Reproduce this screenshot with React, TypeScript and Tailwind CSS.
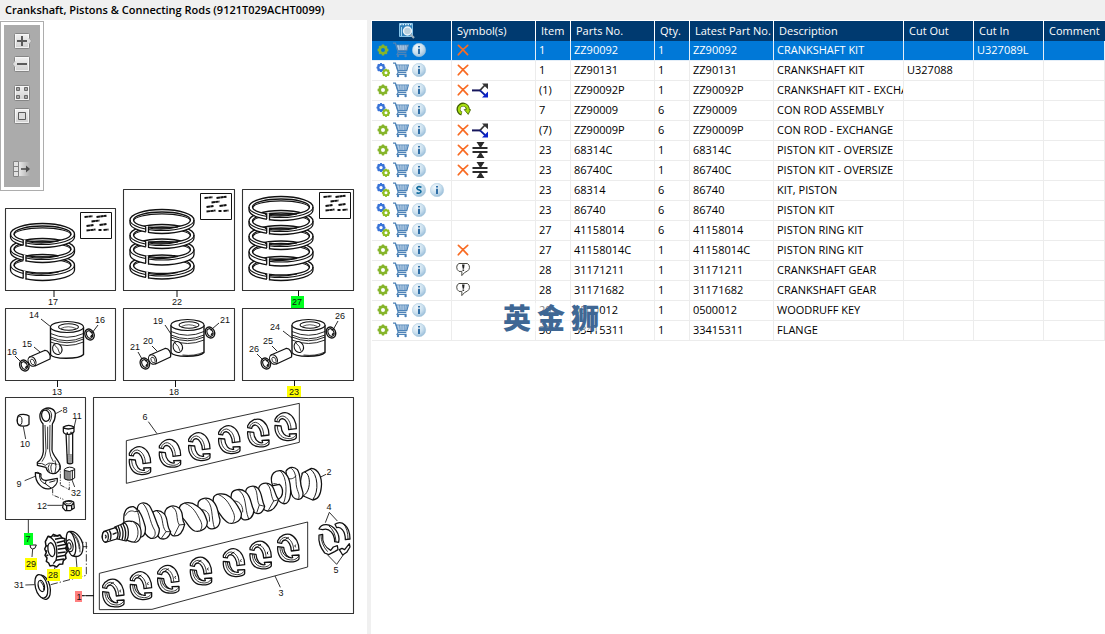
import React from "react";

type Part = {
  gears: "one" | "two";
  s?: boolean;
  symbols: ("x" | "split" | "cycle" | "squeeze" | "note")[];
  item: string;
  part: string;
  qty: string;
  latest: string;
  desc: string;
  out?: string;
  cutIn?: string;
};

const parts: Part[] = [
  { gears: "one", symbols: ["x"], item: "1", part: "ZZ90092", qty: "1", latest: "ZZ90092", desc: "CRANKSHAFT KIT", cutIn: "U327089L" },
  { gears: "two", symbols: ["x"], item: "1", part: "ZZ90131", qty: "1", latest: "ZZ90131", desc: "CRANKSHAFT KIT", out: "U327088" },
  { gears: "one", symbols: ["x", "split"], item: "(1)", part: "ZZ90092P", qty: "1", latest: "ZZ90092P", desc: "CRANKSHAFT KIT - EXCHANGE" },
  { gears: "two", symbols: ["cycle"], item: "7", part: "ZZ90009", qty: "6", latest: "ZZ90009", desc: "CON ROD ASSEMBLY" },
  { gears: "one", symbols: ["x", "split"], item: "(7)", part: "ZZ90009P", qty: "6", latest: "ZZ90009P", desc: "CON ROD - EXCHANGE" },
  { gears: "one", symbols: ["x", "squeeze"], item: "23", part: "68314C", qty: "1", latest: "68314C", desc: "PISTON KIT - OVERSIZE" },
  { gears: "two", symbols: ["x", "squeeze"], item: "23", part: "86740C", qty: "1", latest: "86740C", desc: "PISTON KIT - OVERSIZE" },
  { gears: "two", s: true, symbols: [], item: "23", part: "68314", qty: "6", latest: "86740", desc: "KIT, PISTON" },
  { gears: "two", symbols: [], item: "23", part: "86740", qty: "6", latest: "86740", desc: "PISTON KIT" },
  { gears: "two", symbols: [], item: "27", part: "41158014", qty: "6", latest: "41158014", desc: "PISTON RING KIT" },
  { gears: "one", symbols: ["x"], item: "27", part: "41158014C", qty: "1", latest: "41158014C", desc: "PISTON RING KIT" },
  { gears: "one", symbols: ["note"], item: "28", part: "31171211", qty: "1", latest: "31171211", desc: "CRANKSHAFT GEAR" },
  { gears: "one", symbols: ["note"], item: "28", part: "31171682", qty: "1", latest: "31171682", desc: "CRANKSHAFT GEAR" },
  { gears: "one", symbols: [], item: "29", part: "0500012", qty: "1", latest: "0500012", desc: "WOODRUFF KEY" },
  { gears: "one", symbols: [], item: "30", part: "33415311", qty: "1", latest: "33415311", desc: "FLANGE" },
];

/* ---------- table icons ---------- */

function Cog({ cx, cy, r, color }: { cx: number; cy: number; r: number; color: string }) {
  return (
    <g stroke={color} fill="none">
      <circle cx={cx} cy={cy} r={r * 0.62} strokeWidth={r * 0.5} />
      {[0, 45, 90, 135].map((a) => (
        <g key={a} transform={`rotate(${a} ${cx} ${cy})`} strokeWidth={r * 0.42}>
          <path d={`M${cx} ${cy - r} v${r * 0.35} M${cx} ${cy + r} v${-r * 0.35}`} />
        </g>
      ))}
    </g>
  );
}

function GearIcon({ kind }: { kind: "one" | "two" }) {
  return (
    <svg width="14" height="14" viewBox="0 0 14 14" className="shrink-0">
      {kind === "one" ? (
        <Cog cx={7} cy={7} r={5.4} color="#86b52b" />
      ) : (
        <>
          <Cog cx={5} cy={4.6} r={4.5} color="#3a74d8" />
          <Cog cx={10} cy={9.8} r={4.1} color="#8fbf22" />
        </>
      )}
    </svg>
  );
}

function CartIcon() {
  return (
    <svg width="16" height="16" viewBox="0 0 16 16" className="shrink-0" fill="none" stroke="#4d83b8">
      <path d="M0 1.2h2.4l2.9 9.2h8" strokeWidth="1.3" />
      <path d="M3.2 3h12.2l-1.6 5.6H5z" fill="#dbe9f5" strokeWidth="1.1" />
      <path d="M4 5h11M4.6 7h9.8M6.5 3l.7 5.6M9 3v5.6M11.3 3v5.6M13.4 3l-.7 5.6" strokeWidth=".6" />
      <path d="M5 10.4l-1 2h9.6" strokeWidth="1.1" />
      <circle cx="5" cy="14" r="1.2" fill="#4d83b8" stroke="none" />
      <circle cx="12.6" cy="14" r="1.2" fill="#4d83b8" stroke="none" />
    </svg>
  );
}

function Bubble({ kind }: { kind: "i" | "s" }) {
  return (
    <svg width="15" height="14" viewBox="0 0 15 14" className="shrink-0">
      <defs>
        <radialGradient id="ball" cx=".35" cy=".3" r=".8">
          <stop offset="0" stopColor="#f0f7fc" />
          <stop offset=".55" stopColor="#c9dfee" />
          <stop offset="1" stopColor="#8fb6d4" />
        </radialGradient>
      </defs>
      <circle cx="7" cy="7" r="6.7" fill="url(#ball)" stroke="#a9c8de" strokeWidth=".5" />
      {kind === "i" ? (
        <path d="M6 3h2v1.6H6zM6 5.7h2V11H6z" fill="#2f6ea6" />
      ) : (
        <path d="M9.5 4.4Q7 3.1 5.5 4.1T6 6.5l2 .7Q9.500 8 8.600 9.400T4.500 9.700" fill="none" stroke="#0f6a9c" strokeWidth="1.6" />
      )}
    </svg>
  );
}

function SymbolIcon({ kind }: { kind: Part["symbols"][number] }) {
  return (
    <svg width="16" height="18" viewBox="0 0 16 18" className="shrink-0" fill="none">
      {kind === "x" && <path d="M3.400 4.400Q8 8.500 12.600 13.600M12.700 4.300Q7.500 8.500 3.300 13.800" stroke="#f86b23" strokeWidth="1.700" strokeLinecap="round" />}
      {kind === "split" && (
        <>
          <path d="M0 9.400h8" stroke="#16165c" strokeWidth="2" />
          <path d="M8 9.400L13 4" stroke="#333" strokeWidth="1.600" />
          <path d="M8 9.400L13 14" stroke="#0a1ea0" strokeWidth="1.800" />
          <path d="M10 2.500h6v5.800z" fill="#333" />
          <path d="M16 10.500v6h-6z" fill="#0a22cc" />
        </>
      )}
      {kind === "cycle" && (
        <>
          <path d="M6.800 12.600A4.600 4.600 0 1 1 12.600 8.800" stroke="#3e5c00" strokeWidth="4" />
          <path d="M9.200 8.600h6.400l-2.400 4.800z" fill="#a6dd10" stroke="#3e5c00" strokeWidth=".8" />
          <path d="M6.400 12.200A4.400 4.400 0 1 1 12.500 9.600" stroke="#a6dd10" strokeWidth="2.300" />
        </>
      )}
      {kind === "squeeze" && (
        <>
          <path d="M4.500 1h8L9.600 5.500H7.400zM4.500 17h8L9.600 12.500H7.400z" fill="#2b2b2b" />
          <path d="M.5 7h15M.5 11h15" stroke="#2b2b2b" strokeWidth="1.800" />
          <path d="M8.500 1v5M8.500 12v5" stroke="#2b2b2b" strokeWidth="1.800" />
        </>
      )}
      {kind === "note" && (
        <>
          <path d="M4 2.500h8.500q2 1.500 2 3.800t-2 3.700q-3 .8-5.700 4.600l.1-4.200H4Q1.700 9 1.700 6.200T4 2.500z" fill="#fff" stroke="#4a4a44" strokeWidth="1" />
          <path d="M7 3.500h2.600L9 7.800H7.700z" fill="#222" />
          <path d="M7.500 8.500h1.600v1.400H7.500z" fill="#222" />
        </>
      )}
    </svg>
  );
}

function SearchIcon() {
  return (
    <svg width="16" height="16" viewBox="0 0 16 16">
      <path d="M.5.5h13v13H.5z" fill="#2f7fb8" stroke="#86c4ea" />
      <path d="M1 1.500h12" stroke="#d9effb" strokeWidth="1.500" strokeDasharray="1.500 1" />
      <path d="M2.500 4v9" stroke="#a9d6f0" />
      <circle cx="8.500" cy="8" r="4" fill="#b9cfdc" stroke="#eef4f8" strokeWidth="1.400" />
      <path d="M11.500 11.200l3.500 3.800" stroke="#9fb2be" strokeWidth="2" />
    </svg>
  );
}

/* ---------- viewer toolbar ---------- */

const Plate = () => (
  <>
    <defs>
      <linearGradient id="plate" x2="0" y2="1">
        <stop offset="0" stopColor="#f2f2f2" />
        <stop offset="1" stopColor="#cfcfcf" />
      </linearGradient>
    </defs>
    <rect x="2.500" y=".5" width="15" height="15" rx="1" fill="url(#plate)" stroke="#858585" />
    <rect x="3.500" y="1.500" width="13" height="13" fill="none" stroke="#fafafa" strokeWidth=".8" />
  </>
);

const tools: { label: string; gap: string; art: React.ReactNode }[] = [
  {
    label: "Zoom in",
    gap: "mt-2",
    art: (
      <>
        <Plate />
        <path d="M17 5.500L19.500 8 17 10.500z" fill="#ececec" stroke="#8a8a8a" strokeWidth=".6" />
        <path d="M16.500 5.500h1v5h-1z" fill="#ececec" />
        <path d="M5 8h10M10 3v10" stroke="#5a5a5a" strokeWidth="2" />
      </>
    ),
  },
  {
    label: "Zoom out",
    gap: "mt-[7px]",
    art: (
      <>
        <Plate />
        <path d="M3 5.500L.5 8 3 10.500z" fill="#ececec" stroke="#8a8a8a" strokeWidth=".6" />
        <path d="M2.500 5.500h1v5h-1z" fill="#ececec" />
        <path d="M5 8h10" stroke="#5a5a5a" strokeWidth="2" />
      </>
    ),
  },
  {
    label: "Tile view",
    gap: "mt-[13px]",
    art: (
      <>
        <Plate />
        <path d="M4.500 2.500h3v3h-3zM12.500 2.500h3v3h-3zM4.500 10.500h3v3h-3zM12.500 10.500h3v3h-3z" fill="#a5a5a5" stroke="#6a6a6a" />
      </>
    ),
  },
  {
    label: "Fit to window",
    gap: "mt-[7px]",
    art: (
      <>
        <Plate />
        <path d="M6.500 4.500h7v7h-7z" fill="#ddd" stroke="#5a5a5a" />
      </>
    ),
  },
  {
    label: "Toggle list",
    gap: "mt-[37px]",
    art: (
      <>
        <defs>
          <linearGradient id="fade">
            <stop offset="0" stopColor="#e8e8e8" />
            <stop offset="1" stopColor="#ababab" />
          </linearGradient>
        </defs>
        <path d="M7 1h11v14H7z" fill="url(#fade)" />
        <path d="M1.500.5h5v15h-5zM1.500 5.500h5M1.500 10.500h5" fill="#e2e2e2" stroke="#828282" />
        <path d="M9 8h7" stroke="#4d4d4d" strokeWidth="1.600" />
        <path d="M14 4.500L18 8l-4 3.500z" fill="#4d4d4d" />
      </>
    ),
  },
];

/* ---------- parts drawing ---------- */

function PistonRing({ cx, cy, h = 4, gap = -18 }: { cx: number; cy: number; h?: number; gap?: number }) {
  const rx = 32;
  const ry = 10.5;
  const ix = 28.5;
  const iy = 8;
  const t = Math.sqrt(1 - (gap / rx) ** 2);
  const gy = cy + iy * t;
  return (
    <g strokeWidth="1.300">
      <path
        fillRule="evenodd"
        fill="#fff"
        d={`M${cx - rx} ${cy}A${rx} ${ry} 0 0 1 ${cx + rx} ${cy}v${h}A${rx} ${ry} 0 0 1 ${cx - rx} ${cy + h}ZM${cx - ix} ${cy}A${ix} ${iy} 0 0 1 ${cx + ix} ${cy}A${ix} ${iy} 0 0 1 ${cx - ix} ${cy}Z`}
      />
      <path d={`M${cx - rx} ${cy}A${rx} ${ry} 0 0 0 ${cx + rx} ${cy}`} strokeWidth="1.100" />
      <path d={`M${cx - ix} ${cy + 1}A${ix - 0.5} ${iy - 1} 0 0 1 ${cx + ix} ${cy + 1}`} strokeWidth="1.100" />
      <path d={`M${cx - 16} ${cy + 7.5}q16 3.500 32-.5`} strokeWidth="1.100" />
      <path d={`M${cx + gap} ${gy - 1}v${h + 4.5}`} stroke="#fff" strokeWidth="2.200" />
      <path d={`M${cx + gap - 1.3} ${gy - 0.5}v${h + 2.2}M${cx + gap + 1.5} ${gy}v${h + 3}`} strokeWidth="1.300" />
    </g>
  );
}

function NoteCard({ x, y }: { x: number; y: number }) {
  return (
    <g transform={`translate(${x} ${y})`}>
      <rect width="31" height="26" fill="#fff" strokeWidth="1" />
      <path
        d="M4 4.500l8-.8M16 4.500l10-1.300M11 9l8-1M6 13.500l7-1M19 12.500l7-1M6 18l9-1M18 17.500h3M23 17.500l5-.5"
        strokeWidth="1.900"
        strokeDasharray="3.500 .3"
      />
    </g>
  );
}

function Piston({ dx, dy, skirt }: { dx: number; dy: number; skirt?: boolean }) {
  return (
    <g transform={`translate(${dx} ${dy})`} strokeWidth="1.100">
      <path d="M50.500 327v27.500C53 359.500 79 359.500 83.500 354.500V327" fill="#fff" strokeWidth="1.400" />
      <ellipse cx="67" cy="327" rx="16.500" ry="5.500" fill="#fff" />
      <ellipse cx="68.500" cy="327" rx="10" ry="3.200" />
      <path d="M61 328.500q7-3.500 15 0" strokeWidth=".7" />
      <path d="M50.500 333.500q16.500 7.500 33 0M50.500 337q16.500 7.500 33 0M50.500 339q16.500 7.500 33 0M50.500 342q16.500 7 33 0" strokeWidth=".9" />
      {skirt && <path d="M62 357q12 1.500 21.500-3" strokeWidth=".8" />}
      <ellipse cx="57.300" cy="349" rx="4.600" ry="5.600" fill="#fff" transform="rotate(-20 57.300 349)" />
      <path d="M54.500 345q4 3 5 8" strokeWidth=".8" />
      <path d="M29.500 357L44.500 350.500C48 350 51.500 355 50 359L35 366z" fill="#fff" strokeWidth="1.300" />
      <ellipse cx="32" cy="361.500" rx="3.700" ry="5" fill="#fff" transform="rotate(-25 32 361.500)" />
      <ellipse cx="32.500" cy="362" rx="1.800" ry="3" transform="rotate(-25 32.500 362)" strokeWidth=".8" />
      {[
        [24.3, 365.5],
        [89.5, 334.5],
      ].map(([x, y]) => (
        <g key={x} transform={`rotate(-25 ${x} ${y})`}>
          <ellipse cx={x} cy={y} rx="4.500" ry="5.700" fill="#fff" strokeWidth="1.300" />
          <ellipse cx={x} cy={y} rx="2.800" ry="3.900" strokeWidth="1.100" />
          <path d={`M${x} ${y + 3}l2-1.500M${x + 1.5} ${y - 2.5}l1.500 1`} strokeWidth="1.500" />
        </g>
      ))}
    </g>
  );
}

function Shell({ x, y, hole }: { x: number; y: number; hole?: boolean }) {
  return (
    <g transform={`translate(${x} ${y})`}>
      <path d="M-32-4C-34 18-22 40 0 41C14 43 31 39 32 32V21L11 22L13 29C-2 32-13 16-14-2Z" fill="#fff" />
      <path d="M-25-3C-25 16-15 33 2 35C14 38 26 34 32 23" strokeWidth="2.500" />
      <path d="M-32-22C-24-38-8-44 5-41C23-34 32-14 32 6L9 9C9-8 0-22-9-24C-16-24-19-19-20-14L-32-16Z" fill="#fff" />
      <path d="M-26-17C-24-27-16-32-8-32C8-28 16-10 16 7" strokeWidth="2.500" />
      {hole && <path d="M22-10q-5 4 0 8M-20-2q2 26 22 30M-9-26l10-6" strokeWidth="3" />}
    </g>
  );
}

const boxes = [
  [5.5, 208.5, 110, 82],
  [123.5, 189.5, 111, 101],
  [242.5, 189.5, 111, 101],
  [5.5, 308.5, 110, 72],
  [123.5, 308.5, 111, 72],
  [242.5, 308.5, 111, 72],
  [5.5, 397.5, 80, 122],
  [93.5, 397.5, 260, 216],
];

const marks: { x: number; y: number; w: number; h: number; fill: string }[] = [
  { x: 291, y: 296, w: 13, h: 12, fill: "#00ff1e" },
  { x: 287, y: 386, w: 14, h: 11, fill: "#ffff00" },
  { x: 24, y: 533, w: 9, h: 12, fill: "#00ff1e" },
  { x: 25, y: 558, w: 12, h: 12, fill: "#ffff00" },
  { x: 47, y: 569, w: 13, h: 12, fill: "#ffff00" },
  { x: 69, y: 567, w: 13, h: 12, fill: "#ffff00" },
  { x: 75, y: 591, w: 7, h: 11, fill: "#ff8080" },
];

const callouts: [string, number, number][] = [
  ["17", 53, 302], ["22", 177, 302], ["27", 297, 302],
  ["14", 34, 315], ["16", 100, 320], ["15", 27, 344], ["16", 12, 352], ["13", 57, 392],
  ["19", 158, 321], ["21", 225, 320], ["20", 148, 341], ["21", 135, 347], ["18", 174, 392],
  ["24", 275, 327], ["26", 340, 316], ["25", 268, 341], ["26", 254, 349], ["23", 294, 392],
  ["8", 65, 410], ["11", 77, 416], ["10", 25, 444], ["9", 19, 484], ["32", 76, 493], ["12", 42, 506],
  ["7", 28, 539], ["29", 31, 564], ["28", 53, 575], ["30", 75, 573], ["31", 19, 585], ["1", 79, 597],
  ["6", 145, 417], ["2", 329, 472], ["4", 329, 507], ["5", 336, 570], ["3", 281, 593],
];

function ConRodGroup() {
  return (
    <g transform="translate(0 395) scale(0.33333)" strokeWidth="3.800">
      {/* bush */}
      <path d="M55 62C60 57 80 57 87 63V88C82 95 62 95 56 90C50 84 50 68 55 62Z" fill="#fff" />
      <ellipse cx="59" cy="77" rx="7" ry="13" strokeWidth="3" />
      {/* rod */}
      <path d="M129 86C117 75 115 51 132 42C150 34 166 44 166 58C166 70 162 80 157 87L156 165C158 180 170 190 179 207C184 222 172 237 158 236C146 234 140 228 138 217L112 211V202C122 196 128 188 130 170Z" fill="#fff" />
      <ellipse cx="137" cy="62" rx="12" ry="17" transform="rotate(-12 137 62)" />
      <path d="M135 90L138 168Q137 185 126 200M150 90L149 168Q150 185 160 200M143 95v68M138 42q14 0 17 18q0 12-6 22M112 206q14-4 24 5q10-10 22-6M158 205q-10 8-2 28M148 208q-8 10 0 22M165 196q6 18 0 38" strokeWidth="2.600" />
      {/* cap */}
      <path d="M106 233L123 237C120 249 128 258 140 256L172 250C174 264 165 276 150 281C126 286 105 262 106 233Z" fill="#fff" />
      <path d="M119 236q-3 24 18 31q-2-6 3-11M137 267l16 12M148 262l18-5M106 233q6-4 17 4" strokeWidth="3" />
      {/* bolt */}
      <path d="M198 112h20v92q-8 5-16 0z" fill="#fff" />
      <path d="M190 96q16-10 32 0v14q-6 9-18 8q-12 0-14-8zM190 98q14 8 32 0M202 112v6M213 110v7" fill="#fff" />
      <path d="M201 180h15M201 186h15M201 192h15M201 198h15M201 204h14M207 118v60" strokeWidth="2.500" />
      <path d="M193 223q15-12 31-2v28q-15 12-31 2zM193 226q15 8 31-2M198 228v27M204 229v27M210 229v27M217 226v27" fill="#fff" strokeWidth="3" />
      {/* nut */}
      <path d="M190 322q15-9 31-1l2 18-13 8h-14l-8-9zM190 324l10 8 15-1 7-9M200 332v14M215 331v13" fill="#fff" />
      <ellipse cx="205" cy="323" rx="9" ry="4" strokeWidth="2.500" />
      {/* leaders */}
      <g strokeWidth="2.500">
        <path d="M165 57L186 46M222 98L228 72M70 95L77 132M74 257L108 243M215 252L224 276M142 331H188M85 374V415M98 462L96 486M163 527L168 500M231 520L228 482M76 570L104 569" />
        <path d="M158 281V300L190 313M158 205L181 210V268M181 270L208 284V262" strokeDasharray="14 4 3 4" />
        <path d="M152 569L259 541V442H246" strokeDasharray="22 6 4 6" />
        <path d="M246 455H262M246 602H282M246 602H253" />
      </g>
      {/* key */}
      <path d="M90 450H109Q106 463 98 462T90 450z" fill="#fff" strokeWidth="3" />
      {/* timing gear */}
      <path d="M136 440l8-16 10 2 6-8 12 5 8-3 6 9 9 2-1 11 7 8-4 10 5 10-6 9 2 11-8 7-2 10-10 1-8 8-10-5-10 2-4-9-7-5 2-10-6-8 4-9-5-10 4-9z" fill="#fff" strokeWidth="4.500" />
      <path d="M144 424q14 4 22 20q8 24 2 52l-8 10" />
      <ellipse cx="154" cy="464" rx="10" ry="21" fill="#fff" transform="rotate(-10 154 464)" />
      <path d="M160 424l20-3M165 433l23-5M170 443l24-6M172 453l26-5M173 463l27-4M173 474l24-3M171 485l26-4M168 496l24-4M138 452l6 1M136 468l6 0M139 482l6-2" strokeWidth="4.500" />
      {/* flange */}
      <path d="M207 410C230 405 254 438 248 466C244 485 230 488 216 481Z" fill="#fff" />
      <ellipse cx="213" cy="446" rx="13" ry="37" transform="rotate(-10 213 446)" fill="#fff" />
      <ellipse cx="209" cy="452" rx="10" ry="18" transform="rotate(-10 209 452)" />
      <ellipse cx="208" cy="453" rx="5" ry="10" transform="rotate(-10 208 453)" strokeWidth="3" />
      <path d="M214 412q22 20 24 50M218 412q24 22 22 60" strokeWidth="2.500" />
      {/* washer */}
      <ellipse cx="130" cy="577" rx="20" ry="37" transform="rotate(-14 130 577)" fill="#fff" />
      <ellipse cx="124" cy="574" rx="18" ry="36" transform="rotate(-14 124 574)" fill="#fff" />
      <ellipse cx="124" cy="573" rx="9" ry="17" transform="rotate(-14 124 573)" />
      <path d="M121 560q12 8 10 26" strokeWidth="3" />
    </g>
  );
}

function CrankGroup() {
  return (
    <g transform="translate(90 395) scale(0.33333)" strokeWidth="3.800">
      <path d="M109 137L628 25V142L109 265ZM28 535L653 381V516L186 643L28 644Z" strokeWidth="2.600" />
      <path d="M175 80L201 116M690 247L708 238M555 543L571 577M706 383L718 352L742 378M713 480L740 508L761 478M-12 602H11" strokeWidth="2.600" />

      {[[150, 197], [240, 175], [328, 155], [418, 134], [505, 114], [587, 95]].map(([x, y]) => (
        <Shell key={x} x={x} y={y} />
      ))}
      {[[70, 594], [153, 572], [235, 553], [333, 528], [432, 503], [512, 480], [595, 459]].map(([x, y]) => (
        <Shell key={x} x={x} y={y} hole />
      ))}

      {/* crankshaft, rear to front */}
      <g fill="#fff">
        <path d="M636 235L664 220C686 222 697 248 694 276C692 300 684 314 668 315L640 303Z" />
        <path d="M660 222C684 236 688 290 668 314M640 303C630 290 628 250 640 232C660 226 668 284 640 303" strokeWidth="3" />
        <path d="M588 228C597 214 613 214 622 224C634 242 628 262 636 282C642 298 640 311 626 313C612 314 604 302 602 285L590 252Z" />
        <path d="M604 220C624 236 614 264 622 284C628 300 630 308 622 313M592 250C604 254 612 250 618 242" strokeWidth="2.600" />
        <path d="M545 262C540 236 556 225 573 227C594 234 602 262 602 292C600 318 592 328 580 326C566 322 560 310 556 296Z" />
        <path d="M571 228C592 246 592 300 580 326M550 266C566 264 580 280 576 300" strokeWidth="2.600" />
        <path d="M535 275L568 268C582 280 580 304 566 312L540 322Z" />
        <path d="M506 280C510 264 530 260 543 270C556 280 553 300 566 314C560 334 546 350 532 348C516 346 508 330 500 316Z" />
        <path d="M528 265C546 276 540 300 551 318L534 348M551 318L566 314" strokeWidth="2.600" />
        <path d="M467 290C468 274 492 268 504 280C518 296 514 316 524 334C520 350 510 360 496 354C482 348 474 322 462 308Z" />
        <path d="M490 274C506 288 498 314 508 330L500 354M508 330L524 334" strokeWidth="2.600" />
        <path d="M424 300C424 284 450 278 466 290C486 306 480 326 492 346C490 366 478 378 460 374C446 366 440 340 420 324Z" />
        <path d="M444 284C472 302 462 336 476 372M428 318C446 316 460 330 458 352" strokeWidth="2.600" />
        <path d="M370 310C372 296 402 290 420 306C440 322 444 334 454 354C456 376 438 388 416 384C394 374 388 346 368 332Z" />
        <path d="M384 298C412 310 420 332 430 352C436 366 434 378 426 385" strokeWidth="2.600" />
        <path d="M324 328C324 310 350 304 366 316C386 332 382 352 390 374C390 394 376 406 358 400C344 392 342 366 322 350Z" />
        <path d="M344 310C372 326 362 366 374 402M330 344C350 342 362 358 358 380" strokeWidth="2.600" />
        <path d="M268 342C268 322 300 316 320 332C342 346 346 362 352 380C352 400 336 412 314 408C292 398 290 372 266 360Z" />
        <path d="M282 324C312 334 320 358 332 378C338 392 336 402 328 408" strokeWidth="2.600" />
        <path d="M224 358C224 334 250 326 268 340C284 356 272 372 284 388C278 414 266 426 248 422C232 412 234 388 218 376Z" />
        <path d="M244 334C268 346 256 372 268 390L252 422M268 390L284 388" strokeWidth="2.600" />
        <path d="M184 364C186 344 208 342 222 356C236 370 228 394 242 410C238 428 226 436 210 430C194 418 198 394 182 384Z" />
        <path d="M200 348C224 362 212 392 228 410L214 430M228 410L242 410M188 384C202 382 210 396 206 412" strokeWidth="2.600" />
        <path d="M142 340C144 322 166 318 178 332C192 352 196 376 208 402C208 424 198 432 182 430C164 424 156 398 146 378Z" />
        <path d="M158 325C178 344 178 380 194 406C198 418 194 426 186 430" strokeWidth="2.600" />
        <path d="M102 382C98 350 110 334 130 335C150 344 158 366 166 396C168 416 162 426 148 428L120 410Z" />
        <path d="M136 340C148 350 152 390 150 416M106 362C114 346 126 346 134 350L150 348" strokeWidth="2.600" />
        <path d="M96 388C104 376 128 374 144 388C158 402 156 434 140 441C124 444 106 434 98 426Z" />
        <path d="M126 378C148 388 150 428 132 441" strokeWidth="2.600" />
        <path d="M74 396L104 384C118 394 118 428 108 438L82 432Z" />
        <path d="M84 393q11 20 3 40M92 390q12 20 4 45M99 387q13 22 5 50M78 396q9 18 2 36" strokeWidth="4" />
        <path d="M42 409L76 398C86 406 86 424 80 432L46 442C34 434 34 416 42 409Z" />
        <ellipse cx="46" cy="425" rx="9" ry="16" />
        <path d="M45 420q6 3 1 10M58 406q9 14 2 30M68 418l12-5" strokeWidth="4" />
      </g>

      {/* thrust washers */}
      <g fill="#fff">
        <path d="M735 388C754 374 780 392 780 432L766 434C766 408 752 394 740 398Z" />
        <path d="M687 402C694 384 722 384 738 406C748 420 748 434 746 442L734 440C734 418 718 396 698 404Z" />
        <path d="M687 420C684 446 696 464 704 474L716 479L734 470L744 464L742 452L730 456L722 466C706 458 696 440 698 418Z" />
        <path d="M748 464L756 460L764 464L778 446L780 456L770 472L758 480Z" />
      </g>
      <path d="M716 392q20 16 22 48M760 386q14 16 14 46M693 420q0 28 20 50" strokeWidth="2.600" />
    </g>
  );
}

function PartsDrawing() {
  return (
    <svg
      viewBox="0 20 367 614"
      className="col-start-1 row-start-1 block w-full"
      role="img"
      aria-label="Exploded view of crankshaft, pistons and connecting rods"
      fill="none"
      stroke="#111"
      strokeLinejoin="round"
    >
      {boxes.map(([x, y, w, h]) => (
        <rect key={`${x}-${y}`} x={x} y={y} width={w} height={h} stroke="#333" strokeWidth="1.100" />
      ))}
      <path d="M54 290v7M177 290v7M298.500 290v7M57.500 380v7M175.500 380v7M294.500 380v6" />

      {[265, 249, 234].map((y, i) => (
        <PistonRing key={y} cx={42.5} cy={y} h={i === 0 ? 5 : 3} />
      ))}
      {[265.5, 249.5, 235, 220].map((y, i) => (
        <PistonRing key={y} cx={162} cy={y} h={i === 1 ? 5 : 3} gap={-15} />
      ))}
      {[267, 251.5, 236, 221, 207].map((y, i) => (
        <PistonRing key={y} cx={281} cy={y} h={i === 1 ? 4 : 3} gap={-13} />
      ))}
      <NoteCard x={80.5} y={212.5} />
      <NoteCard x={200.5} y={193.5} />
      <NoteCard x={319.5} y={192.5} />

      <Piston dx={0} dy={0} />
      <Piston dx={120.5} dy={-2} skirt />
      <Piston dx={241.5} dy={-2} skirt />
      <path
        d="M41 319L51 327M98 325L92 333M34 347L40 352M15 356L22 363M165 325L171 334M219 323L212 329M152 346L157 351M138 352L142 359M283 331L292 338M338 321L333 330M272 346L277 351M257 354L264 361"
        strokeWidth=".9"
      />

      <ConRodGroup />
      <CrankGroup />

      {marks.map((m) => (
        <rect key={m.x} x={m.x} y={m.y} width={m.w} height={m.h} fill={m.fill} stroke="none" />
      ))}
      {callouts.map(([t, x, y]) => (
        <text key={`${x}-${y}`} x={x} y={y + 3} textAnchor="middle" fill="#111" stroke="none" className="font-['Liberation_Sans',sans-serif] text-[9px]">
          {t}
        </text>
      ))}
    </svg>
  );
}

/* ---------- page ---------- */

const headers = ["Symbol(s)", "Item", "Parts No.", "Qty.", "Latest Part No.", "Description", "Cut Out", "Cut In", "Comment"];

export default function App() {
  return (
    <div className="flex min-h-screen flex-col bg-white font-['Open_Sans','Noto_Sans',sans-serif] text-[11px] leading-4 text-black">
      <h1 className="h-5 bg-[#f0f0f0] px-[5px] pt-[2px] text-[11px] leading-4 font-semibold whitespace-nowrap">
        Crankshaft, Pistons &amp; Connecting Rods (9121T029ACHT0099)
      </h1>
      <div className="flex flex-1 items-stretch">
        <section className="grid w-[367px] shrink-0 content-start items-start">
          <PartsDrawing />
          <div className="z-10 col-start-1 row-start-1 mt-px w-11 border border-[#adadad] bg-white p-[3px]" role="toolbar" aria-label="Drawing tools">
            <div className="flex flex-col items-center bg-[#ababab] pb-[10px]">
              {tools.map((t) => (
                <button key={t.label} type="button" aria-label={t.label} className={`block h-4 w-5 ${t.gap}`}>
                  <svg width="20" height="16" viewBox="0 0 20 16">
                    {t.art}
                  </svg>
                </button>
              ))}
            </div>
          </div>
        </section>
        <div className="w-1 shrink-0 bg-[#f0f0f0]" />
        <main className="relative min-w-0 flex-1 overflow-hidden pt-px pl-px">
          <table className="w-full table-fixed border-separate border-spacing-0">
            <colgroup>
              <col className="w-20" />
              <col className="w-[84px]" />
              <col className="w-[35px]" />
              <col className="w-[84px]" />
              <col className="w-[35px]" />
              <col className="w-[84px]" />
              <col className="w-[130px]" />
              <col className="w-[70px]" />
              <col className="w-[70px]" />
              <col />
            </colgroup>
            <thead>
              <tr className="h-5 bg-[#003a70] text-left text-white">
                <th className="h-5 border-r border-white p-0" aria-label="Actions">
                  <div className="flex justify-center pr-[9px] pl-0">
                    <SearchIcon />
                  </div>
                </th>
                {headers.map((h) => (
                  <th key={h} className="h-5 border-r border-white p-0 pl-[5px] font-normal whitespace-nowrap last:border-r-0">
                    {h}
                  </th>
                ))}
              </tr>
            </thead>
            <tbody className="leading-[18px]">
              {parts.map((p, i) => (
                <tr
                  key={p.part}
                  className={
                    i === 0
                      ? "bg-[#0078d7] text-white *:border-r *:border-b *:border-[#e4eef8]"
                      : "*:border-r *:border-b *:border-[#ececec]"
                  }
                >
                  <td className="h-5 p-0 pl-1 align-top">
                    <div className="flex h-[18px] items-center gap-[3px]">
                      <GearIcon kind={p.gears} />
                      <CartIcon />
                      {p.s && <Bubble kind="s" />}
                      <Bubble kind="i" />
                    </div>
                  </td>
                  <td className="p-0 pl-[3px] align-top">
                    <div className="flex h-[18px] items-center gap-px">
                      {p.symbols.map((s) => (
                        <SymbolIcon key={s} kind={s} />
                      ))}
                    </div>
                  </td>
                  {[p.item, p.part, p.qty, p.latest, p.desc, p.out, p.cutIn, ""].map((t, c) => (
                    <td key={c} className="overflow-hidden p-0 pl-[3px] align-top whitespace-nowrap">
                      {t}
                    </td>
                  ))}
                </tr>
              ))}
            </tbody>
          </table>
          <div className="pointer-events-none absolute top-[283px] left-[132px] flex gap-[6px] bg-white/50 font-['Noto_Sans_CJK_SC',sans-serif] text-[28px] leading-7 font-black text-[#3f6794]">
            <span>英</span>
            <span>金</span>
            <span>狮</span>
          </div>
        </main>
      </div>
    </div>
  );
}
